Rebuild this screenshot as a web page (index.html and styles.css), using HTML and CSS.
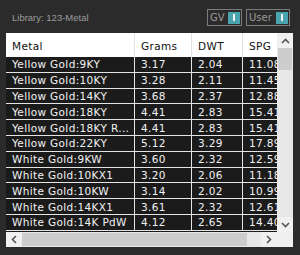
FILE: index.html
```html
<!DOCTYPE html>
<html>
<head>
<meta charset="utf-8">
<link rel="stylesheet" href="styles.css">
</head>
<body>
<div class="panel">
  <div class="topbar">
    <span class="lib">Library: 123-Metal</span>
    <div class="toggles">
      <div class="toggle tg-gv"><span>GV</span><i class="knob"></i></div>
      <div class="toggle tg-user"><span>User</span><i class="knob"></i></div>
    </div>
  </div>
  <div class="tablebox">
    <div class="viewport">
      <div class="row head">
        <div class="c c1">Metal</div><div class="c c2">Grams</div><div class="c c3">DWT</div><div class="c c4">SPG</div>
      </div>
      <div class="row"><div class="c c1">Yellow Gold:9KY</div><div class="c c2">3.17</div><div class="c c3">2.04</div><div class="c c4">11.08</div></div>
      <div class="row"><div class="c c1">Yellow Gold:10KY</div><div class="c c2">3.28</div><div class="c c3">2.11</div><div class="c c4">11.45</div></div>
      <div class="row"><div class="c c1">Yellow Gold:14KY</div><div class="c c2">3.68</div><div class="c c3">2.37</div><div class="c c4">12.88</div></div>
      <div class="row"><div class="c c1">Yellow Gold:18KY</div><div class="c c2">4.41</div><div class="c c3">2.83</div><div class="c c4">15.41</div></div>
      <div class="row"><div class="c c1">Yellow Gold:18KY R...</div><div class="c c2">4.41</div><div class="c c3">2.83</div><div class="c c4">15.41</div></div>
      <div class="row"><div class="c c1">Yellow Gold:22KY</div><div class="c c2">5.12</div><div class="c c3">3.29</div><div class="c c4">17.89</div></div>
      <div class="row"><div class="c c1">White Gold:9KW</div><div class="c c2">3.60</div><div class="c c3">2.32</div><div class="c c4">12.59</div></div>
      <div class="row"><div class="c c1">White Gold:10KX1</div><div class="c c2">3.20</div><div class="c c3">2.06</div><div class="c c4">11.18</div></div>
      <div class="row"><div class="c c1">White Gold:10KW</div><div class="c c2">3.14</div><div class="c c3">2.02</div><div class="c c4">10.99</div></div>
      <div class="row"><div class="c c1">White Gold:14KX1</div><div class="c c2">3.61</div><div class="c c3">2.32</div><div class="c c4">12.61</div></div>
      <div class="row"><div class="c c1">White Gold:14K PdW</div><div class="c c2">4.12</div><div class="c c3">2.65</div><div class="c c4">14.40</div></div>
    </div>
    <div class="vscroll">
      <div class="btn"><svg width="9" height="6" viewBox="0 0 9 6"><path d="M1 5 L4.5 1.5 L8 5" fill="none" stroke="#555" stroke-width="1.6"/></svg></div>
      <div class="vthumb"></div>
      <div class="vtrack"></div>
      <div class="btn"><svg width="9" height="6" viewBox="0 0 9 6"><path d="M1 1 L4.5 4.5 L8 1" fill="none" stroke="#555" stroke-width="1.6"/></svg></div>
    </div>
    <div class="hscroll">
      <div class="hbtn"><svg width="6" height="9" viewBox="0 0 6 9"><path d="M5 1 L1.5 4.5 L5 8" fill="none" stroke="#555" stroke-width="1.6"/></svg></div>
      <div class="hthumb"></div>
      <div class="htrack"></div>
      <div class="hbtn"><svg width="6" height="9" viewBox="0 0 6 9"><path d="M1 1 L4.5 4.5 L1 8" fill="none" stroke="#555" stroke-width="1.6"/></svg></div>
    </div>
    <div class="corner"></div>
  </div>
</div>
</body>
</html>
```
FILE: styles.css
```css
html, body {
  margin: 0;
  padding: 0;
  background: #2b2b2b;
}
body {
  width: 300px;
  height: 255px;
  overflow: hidden;
}
.panel {
  padding: 0 7px 0 6px;
  display: flex;
  flex-direction: column;
}
.topbar {
  height: 33px;
  display: flex;
  align-items: center;
  justify-content: space-between;
}
.lib {
  font-family: "Liberation Sans", Arial, sans-serif;
  font-size: 9.5px;
  color: #9c9c9c;
  padding-left: 6px;
  margin-top: 2px;
}
.toggles {
  display: flex;
  gap: 4px;
  margin-right: 3px;
  margin-top: 2px;
}
.toggle {
  height: 15px;
  border: 1px solid #7c7c7c;
  display: flex;
  align-items: center;
  justify-content: space-between;
  padding: 0 1px 0 2px;
  font-family: "DejaVu Sans", sans-serif;
  font-size: 10px;
  color: #9a9a9a;
}
.tg-gv { width: 30px; }
.tg-user { width: 39px; }
.knob {
  width: 12px;
  height: 12px;
  background: #4aa4ae;
  display: flex;
  align-items: center;
  justify-content: center;
}
.knob::after {
  content: "";
  width: 2px;
  height: 7px;
  background: #f4f4f4;
}
.tablebox {
  display: grid;
  grid-template-columns: 271px 16px;
  grid-template-rows: 199px 15px;
}
.viewport {
  overflow: hidden;
  background: #1b1b1b;
}
.row {
  display: flex;
  height: 15.8px;
  box-sizing: border-box;
  border-bottom: 1px solid #e4e4e4;
  font-family: "DejaVu Sans", sans-serif;
  font-size: 10.5px;
  letter-spacing: 0.35px;
  color: #f2f2f2;
  white-space: nowrap;
}
.row.head {
  height: 24px;
  background: #ffffff;
  color: #111;
  border-bottom: none;
}
.c {
  flex: none;
  box-sizing: border-box;
  padding-left: 6px;
  display: flex;
  align-items: center;
  border-right: 1px solid #e4e4e4;
  overflow: hidden;
}
.head .c { border-right-color: #e2e2e2; padding-top: 1px; }
.c1 { width: 129px; }
.c2 { width: 57px; }
.c3 { width: 51px; }
.c4 { width: 60px; border-right: none; }
.vscroll {
  display: flex;
  flex-direction: column;
  background: #e8e8e8;
}
.btn {
  height: 15px;
  flex: none;
  display: flex;
  align-items: center;
  justify-content: center;
  background: #f0f0f0;
}
.vthumb {
  height: 22px;
  background: #cdcdcd;
  margin: 0 1px;
}
.vtrack { flex: 1; }
.hscroll {
  display: flex;
  background: #e8e8e8;
}
.hbtn {
  width: 16px;
  flex: none;
  display: flex;
  align-items: center;
  justify-content: center;
  background: #f0f0f0;
}
.hthumb {
  width: 225px;
  background: #cdcdcd;
  margin: 1px 0;
}
.htrack { flex: 1; }
.corner { background: #f0f0f0; }
```
